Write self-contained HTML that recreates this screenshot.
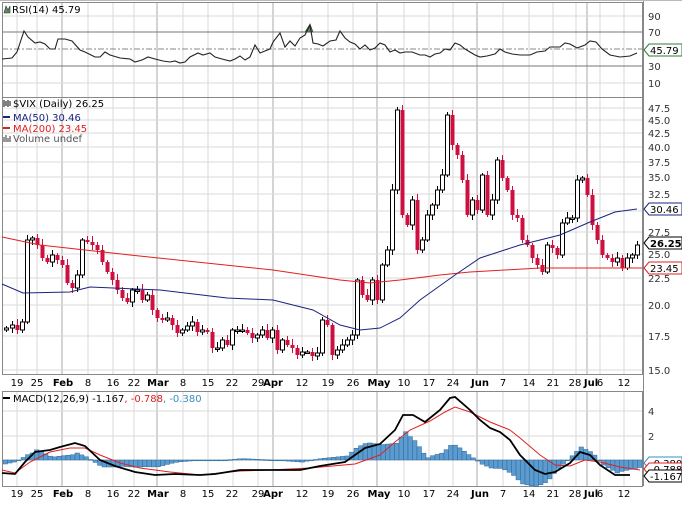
<!DOCTYPE html>
<html><head><meta charset="utf-8"><style>
html,body{margin:0;padding:0;background:#fff;width:682px;height:507px;overflow:hidden}
svg text{font-family:"DejaVu Sans","Liberation Sans",sans-serif;font-size:10px}
</style></head><body>
<svg id="s" width="682" height="507" xmlns="http://www.w3.org/2000/svg"></svg>
<script>
var S=document.getElementById('s'),out='';
function add(x){out+=x;}
function interp(pts,x){for(var i=0;i<pts.length-1;i++){if(x<=pts[i+1][0]){var a=pts[i],b=pts[i+1];var t=(x-a[0])/(b[0]-a[0]);return a[1]+t*(b[1]-a[1]);}}return pts[pts.length-1][1];}
function pl(pts,c,w){add('<polyline fill="none" stroke="'+c+'" stroke-width="'+w+'" points="'+pts.map(function(p){return p.join(',')}).join(' ')+'"/>');}
var weeks=[17,37,62,88,113,134,157,183,208,233,258,273,302,328,353,377,404,429,453,477,503,529,553,576,587,600,624];
var months=[62,157,273,377,477,587];
var panels=[[2,97],[97,374],[391,486]];
panels.forEach(function(p){
 weeks.forEach(function(x){var m=months.indexOf(x)>=0;add('<line x1="'+x+'" y1="'+p[0]+'" x2="'+x+'" y2="'+p[1]+'" stroke="'+(m?'#a8a8a8':'#dadada')+'"/>');});
});
[16,83].forEach(function(y){add('<line x1="2" y1="'+y+'" x2="642" y2="'+y+'" stroke="#dadada"/>');});
[32,66].forEach(function(y){add('<line x1="2" y1="'+y+'" x2="642" y2="'+y+'" stroke="#777"/>');});
add('<line x1="2" y1="49" x2="642" y2="49" stroke="#888" stroke-dasharray="6,2,2,2"/>');
var pl_=[[108,'47.5'],[120,'45.0'],[133,'42.5'],[147,'40.0'],[162,'37.5'],[177,'35.0'],[194,'32.5'],[211,'30.0'],[232,'27.5'],[254,'25.0'],[278,'22.5'],[305,'20.0'],[336,'17.5'],[370,'15.0']];
pl_.forEach(function(a){add('<line x1="2" y1="'+a[0]+'" x2="642" y2="'+a[0]+'" stroke="#dadada"/>');if(a[1]!='30.0')add('<text x="648" y="'+(a[0]+4)+'" fill="#333">'+a[1]+'</text>');});
[[411,'4'],[436,'2'],[460,'0']].forEach(function(a){add('<line x1="2" y1="'+a[0]+'" x2="642" y2="'+a[0]+'" stroke="#dadada"/>');add('<text x="648" y="'+(a[0]+4)+'" fill="#333">'+a[1]+'</text>');});
[[16,'90'],[32,'70'],[66,'30'],[83,'10']].forEach(function(a){add('<text x="648" y="'+(a[0]+4)+'" fill="#333">'+a[1]+'</text>');});
panels.forEach(function(p){add('<rect x="2.5" y="'+(p[0]+.5)+'" width="640" height="'+(p[1]-p[0])+'" fill="none" stroke="#888"/>');});
add('<line x1="643.5" y1="0" x2="643.5" y2="486" stroke="#888"/>');
add('<line x1="0" y1="0.5" x2="682" y2="0.5" stroke="#bbb"/>');
var rsi=[[2,59],[12,58],[17,52],[24,31],[28,37],[35,43],[40,42],[45,44],[50,49],[55,49],[58,39],[65,39],[72,41],[80,50],[85,52],[95,57],[100,57],[105,52],[110,55],[120,58],[130,59],[135,62],[142,60],[148,57],[155,59],[163,61],[170,62],[175,61],[180,63],[185,62],[190,57],[198,53],[203,55],[210,53],[215,57],[222,59],[230,61],[235,59],[240,56],[245,60],[250,57],[255,45],[260,53],[265,51],[270,49],[273,42],[280,33],[285,47],[290,41],[295,46],[300,38],[305,35],[310,25],[313,43],[318,44],[323,46],[330,41],[336,40],[340,31],[345,38],[350,42],[355,44],[360,49],[365,45],[370,50],[375,48],[380,43],[385,45],[390,52],[395,50],[400,53],[405,52],[412,52],[420,55],[425,55],[430,57],[435,54],[440,53],[445,49],[450,50],[455,43],[460,45],[465,49],[470,52],[475,55],[480,57],[487,56],[495,54],[500,49],[505,52],[512,54],[520,55],[530,55],[537,52],[545,51],[550,47],[560,47],[565,43],[570,44],[577,48],[585,45],[590,41],[596,42],[602,49],[610,55],[620,57],[630,56],[637,53]];
add('<polygon points="300,32 305,32 310,24 313,32" fill="#5e8a5e" stroke="#333" stroke-width=".6"/>');
pl(rsi,'#222',1.1);
var cp=[[6,328],[12,325],[17,330],[22,322],[27,240],[32,238],[37,245],[42,258],[47,262],[52,255],[57,260],[62,265],[67,283],[72,288],[77,275],[82,240],[87,242],[92,245],[97,250],[102,262],[107,272],[112,280],[117,290],[122,298],[127,302],[132,290],[137,290],[142,300],[147,295],[152,310],[157,318],[162,320],[167,318],[172,325],[177,333],[182,330],[187,326],[192,322],[197,332],[202,330],[207,332],[212,348],[217,348],[222,340],[227,345],[232,330],[237,330],[242,330],[247,333],[252,338],[257,335],[262,330],[267,338],[272,330],[277,350],[282,340],[287,345],[292,348],[297,355],[302,352],[307,352],[312,356],[317,353],[322,320],[327,325],[332,355],[337,350],[342,345],[347,340],[352,335],[357,280],[362,295],[367,300],[372,280],[377,300],[382,265],[387,250],[392,190],[397,110],[402,215],[407,225],[412,200],[417,250],[422,240],[427,215],[432,205],[437,190],[442,175],[447,115],[452,145],[457,155],[462,180],[467,215],[472,200],[477,210],[482,175],[487,215],[492,200],[497,160],[502,178],[507,190],[512,215],[517,218],[522,240],[527,245],[532,258],[537,265],[542,272],[547,245],[552,248],[557,255],[562,223],[567,218],[572,218],[577,180],[582,178],[587,195],[592,225],[597,240],[602,255],[607,258],[612,262],[617,258],[622,268],[627,258],[632,255],[637,245]];
var ma200=[[2,237],[40,245],[130,255],[273,270],[340,280],[370,283],[400,280],[440,275],[470,272],[540,268],[642,268]];
var ma50=[[2,284],[23,293],[70,292],[90,287],[160,290],[227,298],[273,300],[313,310],[340,325],[360,330],[380,328],[400,318],[420,300],[455,275],[480,258],[520,245],[560,235],[590,222],[615,212],[637,209]];
var prev=330;
cp.forEach(function(p,i){var x=p[0]+.5,c=p[1],o=prev;var hi=Math.min(o,c)-2-(i*7%5),lo=Math.max(o,c)+2+(i*3%4);
 var down=c>o;var col=down?'#cc1040':'#000';
 add('<line x1="'+x+'" y1="'+hi+'" x2="'+x+'" y2="'+lo+'" stroke="'+col+'"/>');
 var t=Math.min(o,c),h=Math.max(Math.abs(c-o),1.5);
 if(down)add('<rect x="'+(x-2)+'" y="'+t+'" width="4" height="'+h+'" fill="#cc1040"/>');
 else add('<rect x="'+(x-2)+'" y="'+t+'" width="4" height="'+h+'" fill="#fff" stroke="#000"/>');
 prev=c;});
pl(ma200,'#e02020',1);pl(ma50,'#1a237e',1);
var mk=[[2,473],[15,474],[25,462],[35,452],[50,450],[60,447],[75,443],[85,446],[100,460],[115,466],[135,472],[155,475],[175,474],[200,475],[215,474],[240,470],[260,470],[275,470],[300,470],[320,466],[345,462],[365,448],[380,444],[395,430],[403,415],[413,415],[425,422],[440,410],[450,398],[455,397],[470,410],[480,420],[490,428],[500,432],[510,440],[520,455],[535,470],[545,474],[555,472],[570,463],[580,452],[590,455],[600,465],[615,475],[630,475]];
var sg=[[2,470],[15,473],[30,462],[50,452],[70,448],[85,448],[100,455],[120,463],[140,468],[170,472],[200,475],[240,471],[270,470],[310,468],[355,464],[380,455],[395,442],[410,430],[430,421],[445,412],[455,407],[470,412],[490,422],[510,430],[520,438],[540,455],[555,465],[570,466],[585,460],[600,462],[620,467],[640,470]];
for(var x=3;x<640;x+=4.5){var d=(interp(sg,x)-interp(mk,x))*1.4;var y=d>0?460-d:460;var h=Math.max(Math.abs(d),.8);
 add('<rect x="'+x+'" y="'+y+'" width="4.5" height="'+h+'" fill="#5b9bd0" stroke="#2f6a9a" stroke-width=".5"/>');}
pl(sg,'#e02020',1);pl(mk,'#000',1.8);
var dl=[[17,'19'],[37,'25'],[63,'Feb',1],[88,'8'],[113,'16'],[134,'22'],[158,'Mar',1],[183,'8'],[208,'15'],[232,'22'],[258,'29'],[273,'Apr',1],[302,'12'],[328,'19'],[353,'26'],[379,'May',1],[404,'10'],[429,'17'],[453,'24'],[480,'Jun',1],[503,'7'],[529,'14'],[553,'21'],[575,'28'],[591,'Jul',1],[600,'6'],[624,'12']];
[386,497].forEach(function(y){dl.forEach(function(d){add('<text x="'+d[0]+'" y="'+y+'" text-anchor="middle" fill="#000"'+(d[2]?' font-weight="bold" font-size="11"':'')+'>'+d[1]+'</text>');});});
add('<path d="M4 13 L6 6 L8 10 L10 6 L10 13Z" fill="#5e8a5e" stroke="#333" stroke-width=".6"/><text x="12" y="13">RSI(14) 45.79</text>');
add('<rect x="3" y="99" width="8" height="9" fill="#fff"/><path d="M4 100v7M6 101v5M8 100v7M10 101v5" stroke="#000"/><text x="13" y="107">$VIX (Daily) 26.25</text>');
add('<line x1="3" y1="117" x2="10" y2="117" stroke="#1a237e" stroke-width="2"/><text x="13" y="121" fill="#1a237e">MA(50) 30.46</text>');
add('<line x1="3" y1="128" x2="10" y2="128" stroke="#e02020" stroke-width="2"/><text x="13" y="132" fill="#e02020">MA(200) 23.45</text>');
add('<path d="M4 142v-5M6 142v-7M8 142v-4M10 142v-6" stroke="#777" stroke-width="1.5"/><text x="13" y="142" fill="#555">Volume undef</text>');
add('<line x1="3" y1="398" x2="10" y2="398" stroke="#000" stroke-width="2"/><text x="13" y="402">MACD(12,26,9) -1.167<tspan fill="#e02020">, -0.788</tspan><tspan fill="#3a8fc0">, -0.380</tspan></text>');
function box(y,t,c,b){add('<path d="M644 '+y+' l5 -6 h33 v12 h-33z" fill="#fff" stroke="'+c+'"/><text x="650" y="'+(y+4)+'" fill="#000"'+(b?' font-weight="bold"':'')+'>'+t+'</text>');}
box(50,'45.79','#2e7d32');box(209,'30.46','#1a237e');box(243,'26.25','#000',1);box(268,'23.45','#e02020');
box(463,'-0.380','#3a8fc0');box(469,'-0.788','#e02020');box(476,'-1.167','#000');
S.innerHTML=out;
</script>
</body></html>
